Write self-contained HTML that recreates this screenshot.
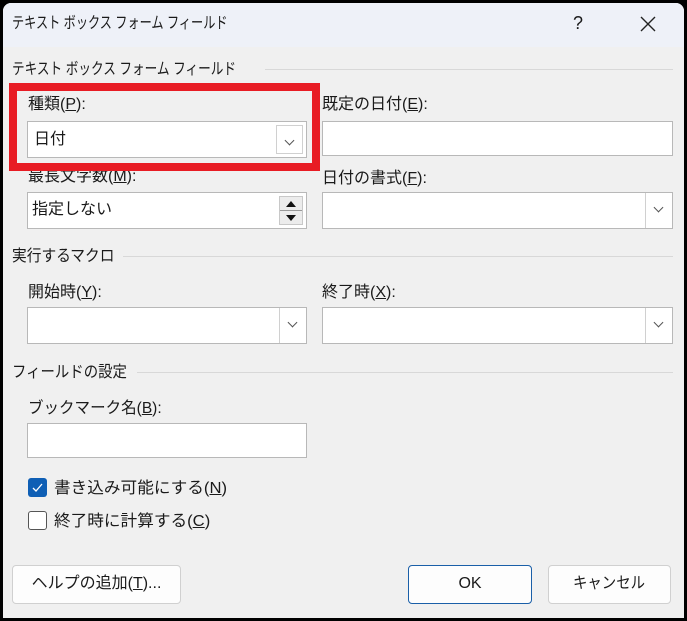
<!DOCTYPE html>
<html><head><meta charset="utf-8"><style>
*{margin:0;padding:0;box-sizing:border-box}
body{width:687px;height:621px;background:#000;position:relative;overflow:hidden;font-family:"Liberation Sans","Noto Sans CJK JP",sans-serif;font-size:16px;color:#1a1a1a}
.win{position:absolute;left:3px;top:3px;width:681px;height:615px;background:#f0f0f0;border-radius:8px 8px 0 0;overflow:hidden}
.title{position:absolute;left:0;top:0;width:681px;height:44px;background:#eef1f8}
.a{position:absolute;white-space:nowrap;line-height:20px;transform-origin:0 50%}
.box{position:absolute;background:#fff;border:1px solid #b8b8b8}
.dd{position:absolute;right:0;top:0;width:27px;height:100%;border-left:1px solid #d0d0d0}
.dd::after{content:"";position:absolute;left:9px;top:11px;width:6px;height:6px;border-right:1px solid #555;border-bottom:1px solid #555;transform:rotate(45deg)}
.line{position:absolute;height:1px;background:#d8d8d8}
.btn{position:absolute;background:#fdfdfd;border:1px solid #d0d0d0;border-radius:4px;text-align:center;line-height:36px}
u{text-decoration:underline}
</style></head><body>
<div class="win">
<div class="title"></div>
<div class="a" style="left:9px;top:11px;transform:scaleX(0.76)">テキスト ボックス フォーム フィールド</div>
<div class="a" style="left:570px;top:10px;font-size:18px">?</div>
<svg style="position:absolute;left:637px;top:13px" width="16" height="16"><path d="M1 1L15 15M15 1L1 15" stroke="#222" stroke-width="1.4"/></svg>

<div class="a" style="left:9px;top:57px;transform:scaleX(0.79)">テキスト ボックス フォーム フィールド</div>
<div class="line" style="left:262px;top:66px;width:408px"></div>

<div class="a" style="left:25px;top:92px">種類(<u>P</u>):</div>
<div class="box" style="left:24px;top:118px;width:280px;height:37px"><div class="a" style="left:6px;top:8px">日付</div><div class="dd" style="top:3px;right:3px;height:29px;border:1px solid #d0d0d0;background:#fff"></div></div>

<div class="a" style="left:319px;top:92px">既定の日付(<u>E</u>):</div>
<div class="box" style="left:319px;top:118px;width:351px;height:35px"></div>

<div class="a" style="left:25px;top:164px">最長文字数(<u>M</u>):</div>
<div style="position:absolute;left:6px;top:80px;width:311px;height:88px;border:8px solid #e81c24"></div>
<div class="box" style="left:24px;top:189px;width:280px;height:37px"><div class="a" style="left:4px;top:7px">指定しない</div>
<div style="position:absolute;right:3px;top:3px;width:24px;height:29px;background:#ececec;border:1px solid #c8c8c8">
<div style="position:absolute;left:6px;top:4px;border:5px solid transparent;border-bottom:6px solid #111;border-top:0"></div>
<div style="position:absolute;left:0;top:13px;width:22px;height:1px;background:#999"></div>
<div style="position:absolute;left:6px;top:18px;border:5px solid transparent;border-top:6px solid #111;border-bottom:0"></div></div></div>

<div class="a" style="left:319px;top:166px">日付の書式(<u>F</u>):</div>
<div class="box" style="left:319px;top:189px;width:351px;height:37px"><div class="dd"></div></div>

<div class="a" style="left:9px;top:244px;transform:scaleX(0.92)">実行するマクロ</div>
<div class="line" style="left:120px;top:253px;width:550px"></div>

<div class="a" style="left:25px;top:280px">開始時(<u>Y</u>):</div>
<div class="box" style="left:24px;top:304px;width:280px;height:37px"><div class="dd"></div></div>
<div class="a" style="left:319px;top:280px">終了時(<u>X</u>):</div>
<div class="box" style="left:319px;top:304px;width:351px;height:37px"><div class="dd"></div></div>

<div class="a" style="left:9px;top:360px;transform:scaleX(0.9)">フィールドの設定</div>
<div class="line" style="left:134px;top:369px;width:536px"></div>

<div class="a" style="left:25px;top:396px;transform:scaleX(0.97)">ブックマーク名(<u>B</u>):</div>
<div class="box" style="left:24px;top:420px;width:280px;height:35px"></div>

<div style="position:absolute;left:25px;top:475px;width:19px;height:19px;background:#0f5fb5;border-radius:3px"><svg width="19" height="19"><path d="M5 10L8 13L14 6" stroke="#fff" stroke-width="1.3" fill="none"/></svg></div>
<div class="a" style="left:51px;top:476px;transform:scaleX(1.04)">書き込み可能にする(<u>N</u>)</div>
<div style="position:absolute;left:25px;top:508px;width:19px;height:19px;background:#fff;border:1px solid #555;border-radius:3px"></div>
<div class="a" style="left:51px;top:509px;transform:scaleX(1.04)">終了時に計算する(<u>C</u>)</div>

<div class="btn" style="left:9px;top:562px;width:169px;height:39px">ヘルプの追加(<u>T</u>)...</div>
<div class="btn" style="left:405px;top:562px;width:124px;height:39px;border-color:#1a5fa8">OK</div>
<div class="btn" style="left:545px;top:562px;width:123px;height:39px"><span style="display:inline-block;transform:scaleX(0.9)">キャンセル</span></div>
</div>
</body></html>
